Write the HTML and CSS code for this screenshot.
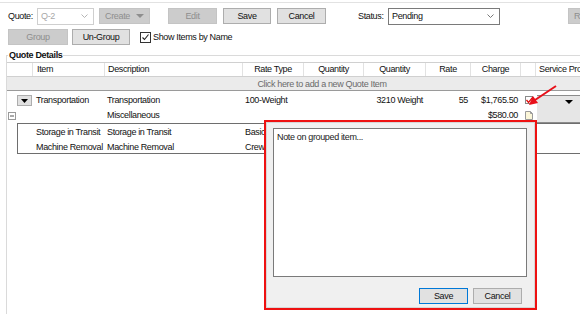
FILE: index.html
```html
<!DOCTYPE html>
<html lang="en">
<head>
    <meta charset="UTF-8">
    <meta name="viewport" content="width=device-width, initial-scale=1.0">
    <title>Quote Details</title>
    <link rel="stylesheet" href="styles.css">
</head>
<body>
    <div class="app">
        <div class="topline"></div>
        <div class="bar bar-one">
            <span class="lbl lbl-quote">Quote:</span>
            <div class="sel sel-quote dis">
                <span>Q-2</span>
                <svg class="chev" width="7" height="4" viewBox="0 0 7 4"><polyline points="0.5,0.5 3.5,3.5 6.5,0.5" fill="none" stroke="currentColor"/></svg>
            </div>
            <div class="btn dis btn-create">Create <svg width="8" height="4" viewBox="0 0 8 4"><polygon points="0,0 8,0 4,4" fill="currentColor"/></svg></div>
            <div class="btn dis btn-edit">Edit</div>
            <div class="btn btn-save">Save</div>
            <div class="btn btn-cancel">Cancel</div>
            <span class="lbl lbl-status">Status:</span>
            <div class="sel sel-status">
                <span>Pending</span>
                <svg class="chev" width="7" height="4" viewBox="0 0 7 4"><polyline points="0.5,0.5 3.5,3.5 6.5,0.5" fill="none" stroke="currentColor"/></svg>
            </div>
            <div class="btn dis btn-r">Re</div>
        </div>
        <div class="bar bar-two">
            <div class="btn dis btn-group">Group</div>
            <div class="btn btn-ungroup">Un-Group</div>
            <label class="chk">
                <span class="box">
                    <svg width="9" height="9" viewBox="0 0 9 9"><polyline points="1.5,4.5 3.5,6.5 7.5,1.5" fill="none" stroke="#222" stroke-width="1.1"/></svg>
                </span>
                Show Items by Name
            </label>
        </div>

        <fieldset class="details">
            <legend>Quote Details</legend>
            <div class="grid">
                <div class="row head">
                    <div class="cell"></div>
                    <div class="cell">Item</div>
                    <div class="cell">Description</div>
                    <div class="cell c">Rate Type</div>
                    <div class="cell c">Quantity</div>
                    <div class="cell c">Quantity</div>
                    <div class="cell c">Rate</div>
                    <div class="cell c">Charge</div>
                    <div class="cell"></div>
                    <div class="cell">Service Prov</div>
                </div>
                <div class="add-row">Click here to add a new Quote Item</div>
                <div class="row data first">
                    <div class="cell expander">
                        <span class="drop"><svg width="7" height="4" viewBox="0 0 7 4"><polygon points="0,0 7,0 3.5,4" fill="#000"/></svg></span>
                    </div>
                    <div class="cell">Transportation</div>
                    <div class="cell">Transportation</div>
                    <div class="cell">100-Weight</div>
                    <div class="cell"></div>
                    <div class="cell r">3210 Weight</div>
                    <div class="cell r">55</div>
                    <div class="cell r">$1,765.50</div>
                    <div class="cell mark">
                        <svg width="9" height="9" viewBox="0 0 9 9"><rect x="0.5" y="0.5" width="7" height="7" fill="#fff" stroke="#8a8a8a"/><polyline points="1.5,4 3.5,6.5 8,1" fill="none" stroke="#e01010" stroke-width="1.3"/></svg>
                    </div>
                    <div class="cell provider top"><svg width="8" height="4" viewBox="0 0 8 4"><polygon points="0,0 8,0 4,4" fill="#000"/></svg></div>
                </div>
                <div class="row data">
                    <div class="cell collapse">
                        <svg width="8" height="8" viewBox="0 0 8 8"><rect x="0.5" y="0.5" width="7" height="7" fill="#fff" stroke="#9a9a9a"/><line x1="2" y1="4" x2="6" y2="4" stroke="#555"/></svg>
                    </div>
                    <div class="cell"></div>
                    <div class="cell">Miscellaneous</div>
                    <div class="cell"></div>
                    <div class="cell"></div>
                    <div class="cell"></div>
                    <div class="cell"></div>
                    <div class="cell r">$580.00</div>
                    <div class="cell mark">
                        <svg width="8" height="9" viewBox="0 0 8 9"><path d="M0.5 0.5 H5.5 L7.5 2.5 V8.5 H0.5 Z" fill="#fbf6d8" stroke="#9a9a9a"/><path d="M5.5 0.5 V2.5 H7.5" fill="none" stroke="#9a9a9a"/></svg>
                    </div>
                    <div class="cell provider bottom"></div>
                </div>
                <div class="group-box">
                    <div class="row sub">
                        <div class="cell"></div>
                        <div class="cell">Storage in Transit</div>
                        <div class="cell">Storage in Transit</div>
                        <div class="cell">Basic</div>
                    </div>
                    <div class="row sub">
                        <div class="cell"></div>
                        <div class="cell">Machine Removal</div>
                        <div class="cell">Machine Removal</div>
                        <div class="cell">Crew</div>
                    </div>
                </div>
            </div>
        </fieldset>

        <!-- note popup on the grouped item -->
        <div class="note">
            <div class="note-inner">
                <textarea class="note-text">Note on grouped item...</textarea>
                <div class="note-actions">
                    <div class="btn btn-ok">Save</div>
                    <div class="btn btn-close">Cancel</div>
                </div>
            </div>
        </div>

        <svg class="arrow" width="34" height="26" viewBox="0 0 34 26">
            <line x1="30" y1="2" x2="9" y2="16" stroke="#e8101a" stroke-width="2"/>
            <polygon points="3,21 7,12 12,19" fill="#e8101a"/>
        </svg>
    </div>
</body>
</html>
```

FILE: styles.css
```css
* {
    padding: 0;
    margin: 0;
    box-sizing: border-box;
}
body {
    width: 580px;
    height: 314px;
    overflow: hidden;
    background: #fff;
    font-family: "Liberation Sans", Arial, sans-serif;
    font-size: 9px;
    letter-spacing: -0.35px;
    color: #111;
}
.app {
    position: relative;
    width: 580px;
    height: 314px;
    overflow: hidden;
}
.topline {
    height: 3px;
    border-bottom: 1px solid #e2e2e2;
}
.bar {
    display: flex;
    align-items: center;
    padding-left: 8px;
    height: 16px;
}
.bar > * {
    flex-shrink: 0;
}
.bar-one {
    margin-top: 5px;
}
.bar-two {
    margin-top: 5px;
}
.lbl {
    white-space: nowrap;
}
.lbl-quote {
    width: 29px;
}
.lbl-status {
    margin-left: 32px;
    width: 30px;
}
.sel {
    display: flex;
    align-items: center;
    justify-content: space-between;
    height: 17px;
    padding: 0 5px 0 3px;
    background: #fff;
    border: 1px solid #7a7a7a;
    color: #111;
}
.sel .chev {
    color: #777;
}
.sel.dis {
    border-color: #cfcfcf;
    color: #a8a8a8;
}
.sel.dis .chev {
    color: #b5b5b5;
}
.sel-quote {
    width: 57px;
}
.sel-status {
    width: 112px;
}
.btn {
    display: flex;
    align-items: center;
    justify-content: center;
    gap: 6px;
    height: 16px;
    background: #e1e1e1;
    border: 1px solid #adadad;
    color: #111;
    white-space: nowrap;
}
.btn.dis {
    background: #cccccc;
    border-color: #c4c4c4;
    color: #8e8e8e;
}
.btn-create {
    width: 51px;
    margin-left: 5px;
}
.btn-edit {
    width: 49px;
    margin-left: 18px;
}
.btn-save {
    width: 48px;
    margin-left: 6px;
}
.btn-cancel {
    width: 49px;
    margin-left: 6px;
}
.btn-r {
    width: 30px;
    margin-left: 68px;
    justify-content: flex-start;
    padding-left: 5px;
}
.btn-group {
    width: 60px;
}
.btn-ungroup {
    width: 58px;
    margin-left: 4px;
}
.chk {
    display: flex;
    align-items: center;
    gap: 2px;
    margin-left: 10px;
    white-space: nowrap;
}
.chk .box {
    display: flex;
    align-items: center;
    justify-content: center;
    width: 11px;
    height: 11px;
    border: 1px solid #333;
    background: #fff;
}
.details {
    margin: 5px 0 0 6px;
    padding: 2px 0 0;
    border: 1px solid #dadada;
    border-right: none;
    border-bottom: none;
    height: 270px;
}
.details legend {
    margin-left: 1px;
    padding: 0 1px;
    font-weight: bold;
    line-height: 10px;
}
.grid {
    width: 630px;
}
.row {
    display: grid;
    grid-template-columns: 25px 72px 138px 61px 60px 62px 45px 50px 15px 101px;
    height: 15px;
    line-height: 15px;
}
.cell {
    padding-left: 3px;
    white-space: nowrap;
    overflow: hidden;
}
.cell.c {
    padding: 0;
    text-align: center;
}
.cell.r {
    padding: 0 2px 0 0;
    text-align: right;
}
.head {
    border-top: 1px solid #d0d0d0;
    border-bottom: 1px solid #d0d0d0;
    height: 15px;
    line-height: 13px;
}
.head .cell + .cell {
    border-left: 1px solid #e2e2e2;
}
.row .cell:nth-child(2) {
    padding-left: 4px;
}
.add-row {
    height: 14px;
    line-height: 14px;
    background: #ebebeb;
    color: #6a6a6a;
    text-align: center;
    border-bottom: 1px solid #9a9a9a;
}
.data {
    height: 15px;
}
.data.first {
    margin-top: 2px;
}
.expander {
    display: flex;
    align-items: center;
    justify-content: flex-end;
    padding: 0;
}
.drop {
    display: flex;
    align-items: center;
    justify-content: center;
    width: 15px;
    height: 11px;
    background: #e1e1e1;
    border: 1px solid #adadad;
}
.collapse {
    display: flex;
    align-items: center;
    padding-left: 1px;
}
.mark {
    display: flex;
    align-items: center;
    padding-left: 5px;
}
.provider {
    margin-left: 2px;
    background: #e6e6e6;
    display: flex;
    align-items: center;
    padding-left: 28px;
}
.provider.top {
    border-top: 1px solid #8c8c8c;
    margin-top: 2px;
}
.provider.bottom {
    border-bottom: 1px solid #8c8c8c;
}
.group-box {
    margin-left: 10px;
    border: 1px solid #6e6e6e;
    height: 31px;
    padding-top: 1px;
}
.sub {
    grid-template-columns: 14px 72px 138px 61px;
}
.note {
    position: absolute;
    left: 264px;
    top: 120px;
    width: 273px;
    height: 190px;
    border: 2px solid #ee1111;
}
.note-inner {
    height: 100%;
    background: #f0f0f0;
    border: 1px solid #d6d6d6;
    padding: 5px 7px 0 6px;
}
.note-text {
    display: block;
    width: 254px;
    height: 149px;
    padding: 3px 3px;
    border: 1px solid #7a7a7a;
    background: #fff;
    font-family: "Liberation Sans", Arial, sans-serif;
    font-size: 9px;
    letter-spacing: -0.35px;
    color: #222;
    resize: none;
}
.note-actions {
    display: flex;
    justify-content: flex-end;
    gap: 5px;
    margin-top: 11px;
    padding-right: 5px;
}
.btn-ok {
    width: 49px;
    border-color: #0078d7;
}
.btn-close {
    width: 49px;
}
.arrow {
    position: absolute;
    left: 526px;
    top: 84px;
}
```
